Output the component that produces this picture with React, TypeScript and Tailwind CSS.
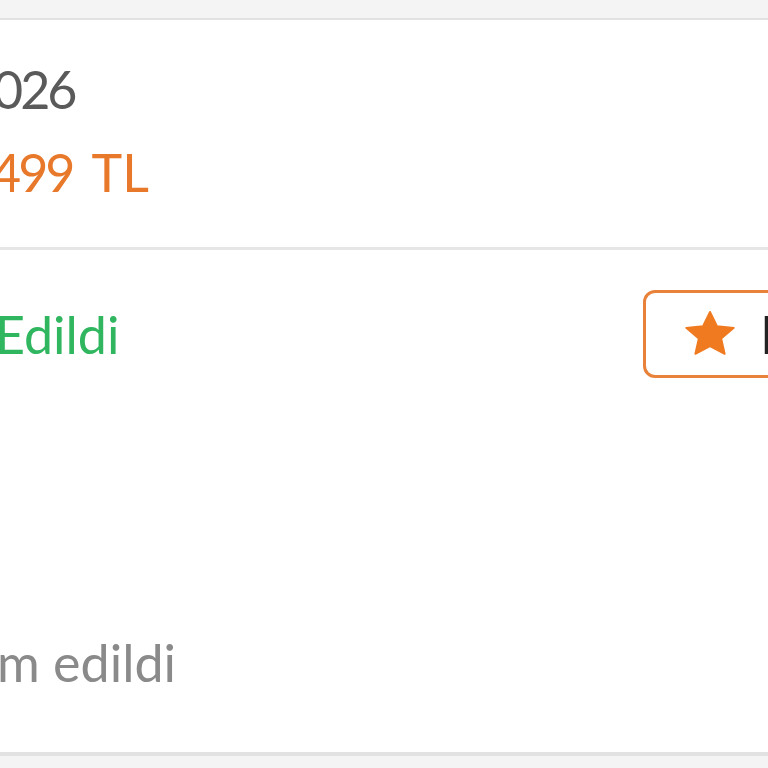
import React from "react";

export default function App() {
  return (
    <div className="w-[768px] h-[768px] overflow-hidden bg-[#f4f4f4] flex flex-col" style={{ fontFamily: "Lato, 'Open Sans', sans-serif" }}>
      <div className="h-[18px] shrink-0" />
      <div className="bg-white border-t-[2px] border-[#e2e2e2] flex flex-col shrink-0">
        <div className="h-[227px] flex flex-col pt-[38px] overflow-hidden">
          <div className="ml-[-7px] text-[52px] leading-[62px] text-[#5a5a5a] whitespace-nowrap tracking-[-3px]">026</div>
          <div className="ml-[-9px] mt-[21px] text-[52px] leading-[62px] text-[#e8782a] whitespace-nowrap flex flex-row">
            <span className="tracking-[-3px]">499</span>
            <span className="ml-[19px]">TL</span>
          </div>
        </div>
      </div>
      <div className="h-[3px] bg-[#e6e6e6] shrink-0" />
      <div className="bg-white h-[502px] shrink-0 flex flex-col overflow-hidden">
        <div className="flex flex-row items-center justify-between pt-[40px]">
          <div className="ml-[-5px] text-[52px] leading-[62px] text-[#2fb65f] whitespace-nowrap">Edildi</div>
          <div className="mr-[-80px] h-[88px] w-[205px] border-[3px] border-[#e8823a] rounded-[12px] flex flex-row items-center pl-[36px] gap-[22px] shrink-0">
            <svg width="56" height="52" viewBox="0 0 24 24" preserveAspectRatio="none" className="shrink-0">
              <path d="M12 1.8l3 6.6 7.2.8-5.4 4.9 1.5 7.1L12 17.6l-6.3 3.6 1.5-7.1L1.8 9.2 9 8.4z" fill="#f07a1f" stroke="#f07a1f" strokeWidth="0.8" strokeLinejoin="round" />
            </svg>
            <span className="text-[52px] leading-[62px] text-[#222]">D</span>
          </div>
        </div>
        <div className="mt-[253px] ml-[-3px] text-[52px] leading-[62px] text-[#8a8a8a] whitespace-nowrap">m edildi</div>
      </div>
      <div className="h-[4px] bg-[#e2e2e2] shrink-0" />
      <div className="flex-1 bg-[#f4f4f4]" />
    </div>
  );
}
